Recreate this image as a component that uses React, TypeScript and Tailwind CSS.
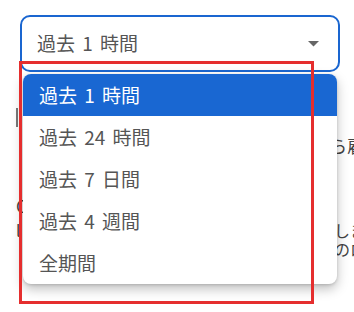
import { useState } from "react";

const options = ["過去 1 時間", "過去 24 時間", "過去 7 日間", "過去 4 週間", "全期間"];

const App = () => {
  const [selected, setSelected] = useState(0);
  const font = { fontFamily: '"Noto Sans CJK JP", "Noto Sans", sans-serif' };

  return (
    <div className="relative w-[354px] h-[312px] overflow-hidden bg-white text-[#555]" style={font}>
      {/* select field */}
      <div className="pt-[15px] pl-[20px]">
        <div className="w-[320px] h-[57px] rounded-[10px] border-2 border-[#1a66d0] flex items-center justify-between pl-[15px] pr-[19px] text-[19px] [word-spacing:3px]">
          <span>{options[selected]}</span>
          <svg width="11" height="6" viewBox="0 0 11 6">
            <path d="M0 0 L11 0 L5.5 5.5 Z" fill="#666" />
          </svg>
        </div>
      </div>

      {/* page content behind the menu */}
      <div className="flex flex-col pl-[16px] text-[17px] leading-[20px] text-[#444]">
        <div className="mt-[36px] h-[20px] flex">
          <span className="w-[2px] h-[19px] bg-[#777]" />
        </div>
        <div className="mt-[8px] flex justify-between">
          <span>「</span>
          <span className="w-[24px] overflow-hidden whitespace-nowrap">ら雇用</span>
        </div>
        <div className="mt-[40px] flex">
          <span>C</span>
        </div>
        <div className="mt-[5px] flex justify-between text-[16px] leading-[19px]">
          <span>l</span>
          <span className="w-[20px] overflow-hidden whitespace-nowrap">しま</span>
        </div>
        <div className="flex justify-end text-[16px] leading-[19px]">
          <span className="w-[20px] overflow-hidden whitespace-nowrap">のロ</span>
        </div>
      </div>

      {/* dropdown menu */}
      <ul className="absolute left-[23px] top-[74px] w-[314px] rounded-[8px] overflow-hidden bg-white shadow-[0_5px_12px_rgba(0,0,0,0.25),0_1px_3px_rgba(0,0,0,0.15)] text-[19px] [word-spacing:3px]">
        {options.map((o, i) => (
          <li
            key={o}
            onClick={() => setSelected(i)}
            className={`h-[42px] flex items-center pl-[16px] cursor-pointer ${
              i === selected ? "bg-[#1967d2] text-white" : "text-[#555] hover:bg-gray-100"
            }`}
          >
            {o}
          </li>
        ))}
      </ul>

      {/* annotation frame */}
      <div className="absolute left-[19px] top-[61px] w-[295px] h-[243px] border-[3px] border-[#e52e2e] pointer-events-none" />
    </div>
  );
};

export default App;
